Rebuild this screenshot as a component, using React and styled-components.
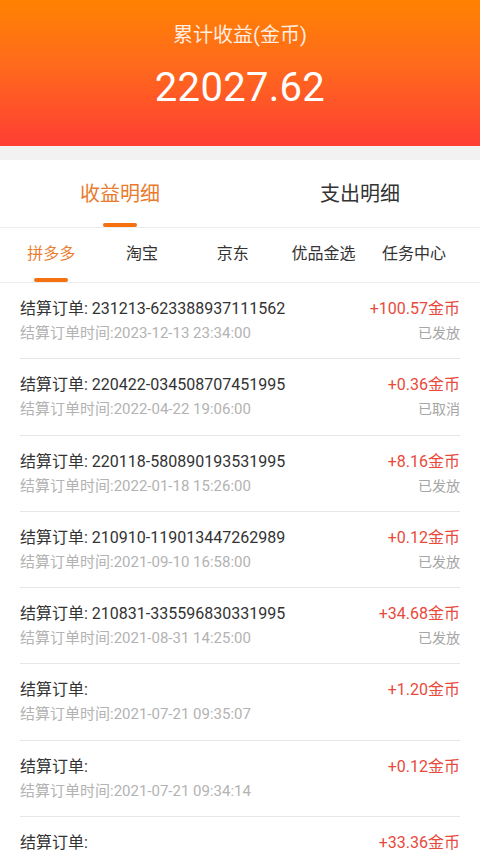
import React from "react";
import styled, { createGlobalStyle } from "styled-components";

const Global = createGlobalStyle`
  html, body { margin: 0; padding: 0; background: #ffffff; }
  body { font-family: Roboto, "Noto Sans CJK SC", sans-serif; -webkit-font-smoothing: antialiased; }
  * { box-sizing: border-box; }
`;

const Page = styled.div`
  width: 480px;
  height: 854px;
  background: #fff;
  overflow: hidden;
`;

const Header = styled.header`
  height: 146px;
  background: linear-gradient(180deg, #ff8202 0%, #ff6a1c 45%, #ff3d34 100%);
  display: flex;
  flex-direction: column;
  align-items: center;
  padding-top: 21px;
  color: #fff;
`;

const HeaderTitle = styled.div`
  font-size: 20px;
  line-height: 28px;
  color: rgba(255, 255, 255, 0.88);
`;

const HeaderValue = styled.div`
  margin-top: 15px;
  font-family: Roboto, sans-serif;
  font-size: 40px;
  line-height: 48px;
  letter-spacing: 0.3px;
`;

const Spacer = styled.div`
  height: 14px;
  background: #f2f2f2;
`;

const MainTabs = styled.nav`
  display: grid;
  grid-template-columns: 1fr 1fr;
  height: 68px;
  border-bottom: 1px solid #ececec;
`;

const MainTab = styled.div`
  display: flex;
  flex-direction: column;
  align-items: center;
  padding-top: 20px;
  font-size: 20px;
  line-height: 28px;
  font-weight: 400;
  color: ${(p) => (p.$active ? "#e97b2e" : "#333")};
`;

const Indicator = styled.span`
  margin-top: auto;
  width: 34px;
  height: 4px;
  border-radius: 2px;
  background: ${(p) => (p.$active ? "#f5700f" : "transparent")};
`;

const SubTabs = styled.nav`
  display: grid;
  grid-template-columns: repeat(5, 90.7px);
  padding-left: 6px;
  height: 55px;
  border-bottom: 1px solid #ececec;
`;

const SubTab = styled.div`
  display: flex;
  flex-direction: column;
  align-items: center;
  padding-top: 15px;
  font-size: 16px;
  line-height: 22px;
  color: ${(p) => (p.$active ? "#ea7d30" : "#333")};
`;

const List = styled.ul`
  list-style: none;
  margin: 0;
  padding: 0;
`;

const Row = styled.li`
  margin: 0 20px;
  padding: 15px 0 15.25px;
  border-bottom: 1px solid #e6e6e6;
  display: grid;
  grid-template-columns: 1fr auto;
  row-gap: 3px;
`;

const OrderText = styled.div`
  font-size: 16px;
  line-height: 22px;
  color: #333;
  white-space: nowrap;
`;

const Amount = styled.div`
  font-size: 16px;
  line-height: 22px;
  color: #e84a3b;
  text-align: right;
  white-space: nowrap;
`;

const TimeText = styled.div`
  font-size: 15px;
  line-height: 20px;
  color: #b3b3b3;
  white-space: nowrap;
`;

const Status = styled.div`
  font-size: 14px;
  line-height: 20px;
  color: #a6a6a6;
  text-align: right;
`;

const rows = [
  { id: "231213-623388937111562", time: "2023-12-13 23:34:00", amount: "+100.57", status: "已发放" },
  { id: "220422-034508707451995", time: "2022-04-22 19:06:00", amount: "+0.36", status: "已取消" },
  { id: "220118-580890193531995", time: "2022-01-18 15:26:00", amount: "+8.16", status: "已发放" },
  { id: "210910-119013447262989", time: "2021-09-10 16:58:00", amount: "+0.12", status: "已发放" },
  { id: "210831-335596830331995", time: "2021-08-31 14:25:00", amount: "+34.68", status: "已发放" },
  { id: "", time: "2021-07-21 09:35:07", amount: "+1.20", status: "" },
  { id: "", time: "2021-07-21 09:34:14", amount: "+0.12", status: "" },
  { id: "", time: "2021-07-21 09:33:02", amount: "+33.36", status: "" },
];

const subTabs = ["拼多多", "淘宝", "京东", "优品金选", "任务中心"];

export default function App() {
  return (
    <Page>
      <Global />
      <Header>
        <HeaderTitle>累计收益(金币)</HeaderTitle>
        <HeaderValue>22027.62</HeaderValue>
      </Header>
      <Spacer />
      <MainTabs>
        <MainTab $active>
          收益明细
          <Indicator $active />
        </MainTab>
        <MainTab>
          支出明细
          <Indicator />
        </MainTab>
      </MainTabs>
      <SubTabs>
        {subTabs.map((t, i) => (
          <SubTab key={t} $active={i === 0}>
            {t}
            <Indicator $active={i === 0} />
          </SubTab>
        ))}
      </SubTabs>
      <List>
        {rows.map((r, i) => (
          <Row key={i}>
            <OrderText>结算订单: {r.id}</OrderText>
            <Amount>{r.amount}金币</Amount>
            <TimeText>结算订单时间:{r.time}</TimeText>
            <Status>{r.status}</Status>
          </Row>
        ))}
      </List>
    </Page>
  );
}
